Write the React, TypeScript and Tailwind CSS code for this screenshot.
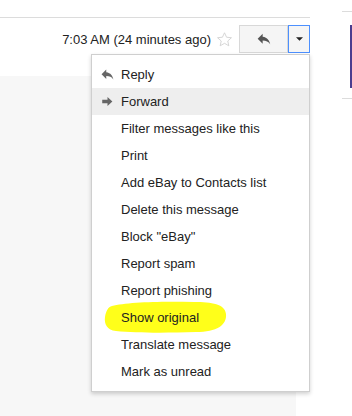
import React from "react";

const ReplyIcon = ({ className }: { className?: string }) => (
  <svg viewBox="0 0 24 24" className={className} fill="currentColor">
    <path d="M10 8.5V4L2.5 11.5 10 19v-4.6c5.2 0 8.8 1.7 11.3 5.4-1-5.2-4.1-10.4-11.3-11.3z" />
  </svg>
);

const ForwardIcon = ({ className }: { className?: string }) => (
  <svg viewBox="0 0 16 16" className={className} fill="currentColor">
    <path d="M1.5 5.8h6.5V2.5l6 5.5-6 5.5v-3.3H1.5z" />
  </svg>
);

const items = [
  "Reply",
  "Forward",
  "Filter messages like this",
  "Print",
  "Add eBay to Contacts list",
  "Delete this message",
  'Block "eBay"',
  "Report spam",
  "Report phishing",
  "Show original",
  "Translate message",
  "Mark as unread",
];

export default function App() {
  return (
    <div
      className="relative flex h-[416px] w-[352px] overflow-hidden bg-white text-[13px] text-[#222]"
      style={{ fontFamily: "Arial, 'Liberation Sans', sans-serif" }}
    >
      {/* left main column */}
      <div className="flex w-[310px] flex-col">
        <div className="mt-[17px] h-[1px] w-[310px] bg-[#dcdcdc]" />
        <div className="flex h-[58px] items-start justify-end pt-[7px]">
          <div className="flex h-[28px] items-center">
            <span className="leading-none">7:03 AM (24 minutes ago)</span>
            <svg viewBox="0 0 24 24" className="ml-[5px] mr-[6px] h-[17px] w-[17px]" fill="none" stroke="#d2d2d2" strokeWidth="1.3">
              <path d="M12 2.5l2.9 6.3 6.9.7-5.2 4.6 1.5 6.8L12 17.4l-6.1 3.5 1.5-6.8-5.2-4.6 6.9-.7z" />
            </svg>
          </div>
          <div className="flex h-[28px] w-[49px] items-center justify-center border border-[#d8d8d8] bg-[#f5f5f5]">
            <ReplyIcon className="h-[16px] w-[16px] text-[#555]" />
          </div>
          <div className="flex h-[28px] w-[22px] items-center justify-center border border-[#4d90fe] bg-[#f5f5f5]">
            <svg viewBox="0 0 8 4" className="h-[4px] w-[7px]" fill="#222">
              <path d="M0 0h8L4 4z" />
            </svg>
          </div>
        </div>
        <div className="w-[296px] flex-1 bg-[#f7f7f7]" />
      </div>

      {/* right column fragments */}
      <div className="ml-[32px] flex w-[10px] flex-col">
        <div className="mt-[11px] h-[1px] w-full bg-[#dcdcdc]" />
        <div className="mt-[13px] h-[63px] w-[2px] self-end bg-[#4b3d8f]" />
        <div className="mt-[10px] h-[1px] w-full bg-[#dcdcdc]" />
      </div>

      {/* dropdown menu */}
      <div className="absolute left-[91px] top-[54px] w-[219px] border border-[#cfcfcf] bg-white py-[6px] shadow-[0_2px_4px_rgba(0,0,0,0.18)]">
        {items.map((label, i) => (
          <div
            key={label}
            className={`relative flex h-[27px] items-center ${i === 1 ? "bg-[#eeeeee]" : ""}`}
          >
            <div className="flex w-[29px] justify-center pl-[1px]">
              {i === 0 && <ReplyIcon className="h-[15px] w-[15px] text-[#666]" />}
              {i === 1 && <ForwardIcon className="h-[13px] w-[13px] text-[#666]" />}
            </div>
            {label === "Show original" && (
              <svg
                viewBox="0 0 124 34"
                className="absolute left-[12px] top-[-4px] h-[34px] w-[124px]"
              >
                <path
                  d="M8 6 C22 2 58 1 90 2 C108 2 121 4 122 14 C123 25 113 32 92 32 C62 33 32 33 12 31 C3 30 0 24 1 17 C2 11 4 7 8 6 Z"
                  fill="#ffff1a"
                />
              </svg>
            )}
            <span className="relative leading-none">{label}</span>
          </div>
        ))}
      </div>
    </div>
  );
}
